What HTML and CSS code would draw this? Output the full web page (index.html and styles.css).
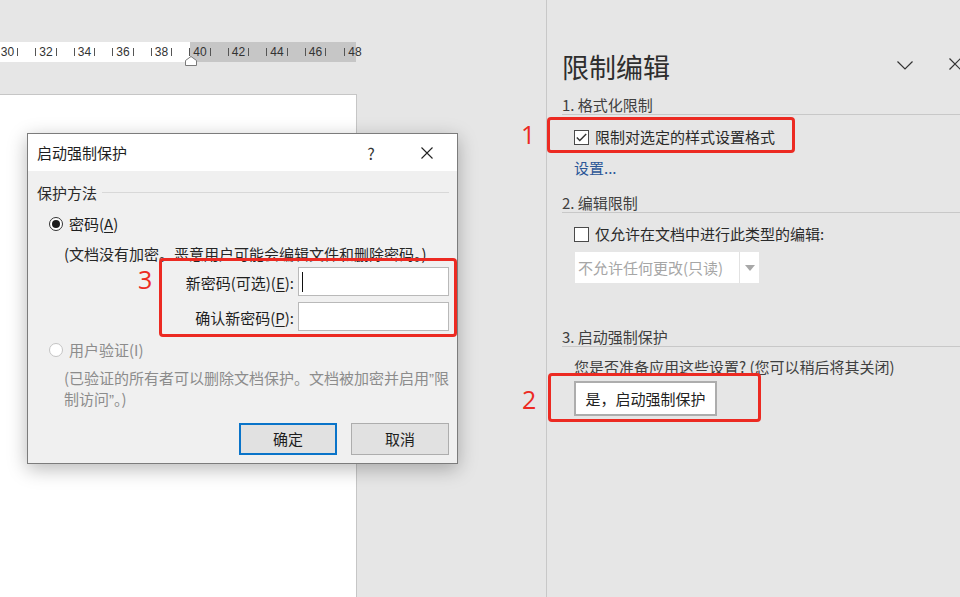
FILE: index.html
```html
<!DOCTYPE html>
<html lang="zh-CN">
<head>
<meta charset="utf-8">
<title>限制编辑</title>
<link rel="stylesheet" href="styles.css">
</head>
<body>
<div class="app">
  <div class="doc">
    <div class="ruler">
      <div class="ruler-cell"><span class="tick"></span><span>30</span><span class="tick"></span></div>
      <div class="ruler-cell"><span class="tick"></span><span>32</span><span class="tick"></span></div>
      <div class="ruler-cell"><span class="tick"></span><span>34</span><span class="tick"></span></div>
      <div class="ruler-cell"><span class="tick"></span><span>36</span><span class="tick"></span></div>
      <div class="ruler-cell"><span class="tick"></span><span>38</span><span class="tick"></span></div>
      <div class="ruler-cell"><span class="tick"></span><span>40</span><span class="tick"></span></div>
      <div class="ruler-cell"><span class="tick"></span><span>42</span><span class="tick"></span></div>
      <div class="ruler-cell"><span class="tick"></span><span>44</span><span class="tick"></span></div>
      <div class="ruler-cell"><span class="tick"></span><span>46</span><span class="tick"></span></div>
      <div class="ruler-cell"><span class="tick"></span><span>48</span></div>
    </div>
    <svg class="indent-marker" width="12" height="10" viewBox="0 0 12 10"><polygon points="0.5,9.5 0.5,4.5 6,0.5 11.5,4.5 11.5,9.5" fill="#fff" stroke="#7a7a7a" stroke-width="1"/></svg>
    <div class="page"></div>
  </div>

  <aside class="pane">
    <div class="pane-head">
      <div class="pane-title">限制编辑</div>
      <svg class="pane-chevron" width="16" height="9" viewBox="0 0 16 9"><polyline points="0.5,0.5 8,8 15.5,0.5" fill="none" stroke="#333" stroke-width="1.2"/></svg>
      <svg class="pane-close" width="12" height="12" viewBox="0 0 12 12"><path d="M0.5 0.5 L11.5 11.5 M11.5 0.5 L0.5 11.5" stroke="#333" stroke-width="1.2"/></svg>
    </div>

    <div class="sec-head sec-1">1. 格式化限制</div>
    <div class="check-row row-1">
      <span class="checkbox checked"><svg width="11" height="9" viewBox="0 0 11 9"><polyline points="0.8,4.5 3.8,7.5 10.2,1" fill="none" stroke="#333" stroke-width="1.4"/></svg></span>
      <span>限制对选定的样式设置格式</span>
    </div>
    <div class="link">设置...</div>

    <div class="sec-head sec-2">2. 编辑限制</div>
    <div class="check-row row-2">
      <span class="checkbox"></span>
      <span>仅允许在文档中进行此类型的编辑:</span>
    </div>
    <div class="dropdown">
      <span class="dropdown-text">不允许任何更改(只读)</span>
      <span class="dropdown-arrow"><svg width="10" height="6" viewBox="0 0 10 6"><polygon points="0,0 10,0 5,6" fill="#a8a8a8"/></svg></span>
    </div>

    <div class="sec-head sec-3">3. 启动强制保护</div>
    <div class="question">您是否准备应用这些设置? (您可以稍后将其关闭)</div>
    <div class="start-btn">是，启动强制保护</div>
  </aside>
</div>

<div class="dialog">
  <div class="dlg-title">
    <span>启动强制保护</span>
    <span class="dlg-help">?</span>
    <svg class="dlg-close" width="12" height="12" viewBox="0 0 12 12"><path d="M0.5 0.5 L11.5 11.5 M11.5 0.5 L0.5 11.5" stroke="#222" stroke-width="1.1"/></svg>
  </div>
  <div class="dlg-body">
    <div class="group-head">保护方法</div>
    <div class="radio-row radio-1">
      <span class="radio on"><span class="dot"></span></span>
      <span>密码(<u>A</u>)</span>
    </div>
    <div class="desc desc-1">(文档没有加密。恶意用户可能会编辑文件和删除密码。)</div>
    <div class="pw-grid">
      <span class="pw-label">新密码(可选)(<u>E</u>):</span>
      <div class="pw-input"><span class="caret"></span></div>
      <span class="pw-label">确认新密码(<u>P</u>):</span>
      <div class="pw-input"></div>
    </div>
    <div class="radio-row radio-2 disabled">
      <span class="radio"></span>
      <span>用户验证(I)</span>
    </div>
    <div class="desc desc-2 disabled">
      <span class="line">(已验证的所有者可以删除文档保护。文档被加密并启用<span class="q">”</span>限</span>
      <span class="line">制访问<span class="q">”</span>。)</span>
    </div>
    <div class="dlg-buttons">
      <div class="btn btn-default">确定</div>
      <div class="btn">取消</div>
    </div>
  </div>
</div>

<div class="anno anno-box-1"></div>
<div class="anno anno-box-2"></div>
<div class="anno anno-box-3"></div>
<div class="anno-num num-1">1</div>
<div class="anno-num num-2">2</div>
<div class="anno-num num-3">3</div>
</body>
</html>
```

FILE: styles.css
```css
* { box-sizing: border-box; }
html, body { margin: 0; padding: 0; }
body {
  width: 960px;
  height: 597px;
  overflow: hidden;
  position: relative;
  background: #e6e6e6;
  font-family: "Noto Sans CJK SC", "Noto Sans", sans-serif;
  color: #262626;
}
u { text-decoration: underline; text-underline-offset: 2px; }

.app { display: flex; height: 597px; }

/* document side */
.doc { width: 546px; flex: none; padding-top: 42px; position: relative; }
.ruler {
  width: 356px;
  height: 20px;
  background: linear-gradient(to right, #fff 0, #fff 190px, #c6c6c6 190px, #c6c6c6 356px);
  display: flex;
  font-family: "Liberation Sans", sans-serif;
  font-size: 12px;
  line-height: 20px;
  color: #333;
}
.ruler-cell {
  flex: none;
  width: 38.5px;
  display: flex;
  justify-content: center;
  align-items: center;
  gap: 3px;
}
.ruler-cell:first-child { margin-left: -11.75px; }
.ruler-cell:last-child { justify-content: flex-start; padding-left: 9.6px; }
.tick { width: 1px; height: 8px; background: #555; }
.indent-marker { position: absolute; left: 185px; top: 56px; }
.page {
  margin-top: 32px;
  width: 357px;
  height: 503px;
  background: #fff;
  border-top: 1px solid #c6c6c6;
  border-right: 1px solid #c6c6c6;
}

/* right task pane */
.pane {
  flex: 1;
  border-left: 1px solid #c8c8c8;
  padding: 49px 0 0 15px;
  font-size: 15px;
  line-height: 20px;
}
.pane-head { display: flex; align-items: center; height: 36px; }
.pane-title { font-size: 27px; line-height: 36px; color: #2e2e2e; }
.pane-chevron { margin-left: auto; margin-top: -4px; }
.pane-close { margin-left: 36px; margin-right: -1px; margin-top: -6px; }

.sec-head {
  line-height: 19px;
  border-bottom: 1px solid #c8c8c8;
  color: #404040;
}
.sec-1 { margin-top: 10px; }
.sec-2 { margin-top: 15px; }
.sec-3 { margin-top: 44px; }

.check-row { display: flex; align-items: center; gap: 6px; padding-left: 12px; color: #2a2a2a; }
.row-1 { margin-top: 12px; }
.row-2 { margin-top: 11px; }
.checkbox {
  width: 15px; height: 15px;
  border: 1px solid #4a4a4a;
  background: #fff;
  display: flex; align-items: center; justify-content: center;
}
.link { margin-top: 11px; padding-left: 12px; color: #2b5797; }

.dropdown {
  margin: 8px 0 0 13px;
  width: 184px;
  height: 31px;
  background: #fff;
  display: flex;
}
.dropdown-text { flex: 1; padding-left: 3px; line-height: 31px; color: #a6a6a6; }
.dropdown-arrow {
  width: 20px;
  border-left: 1px solid #e2e2e2;
  display: flex; align-items: center; justify-content: center;
}

.question { margin-top: 10px; padding-left: 12px; color: #404040; }
.start-btn {
  margin: 4px 0 0 12px;
  width: 143px;
  height: 35px;
  background: #fff;
  border: 2px solid #adadad;
  display: flex; align-items: center; justify-content: center;
  color: #222;
}

/* dialog */
.dialog {
  position: absolute;
  left: 27px;
  top: 133px;
  width: 431px;
  height: 331px;
  border: 1px solid #7c7c7c;
  box-shadow: 0 5px 18px rgba(0, 0, 0, 0.28);
  font-size: 15px;
  line-height: 20px;
  color: #1e1e1e;
}
.dlg-title {
  height: 37px;
  background: #fff;
  display: flex;
  align-items: center;
  padding: 0 24px 0 9px;
}
.dlg-help { margin-left: auto; width: 8px; text-align: center; margin-right: 46px; font-size: 16px; color: #333; }
.dlg-body {
  background: #f0f0f0;
  height: 292px;
  padding: 12px 8px 0 9px;
}
.group-head { display: flex; align-items: center; gap: 5px; color: #2a2a2a; }
.group-head::after { content: ""; flex: 1; height: 1px; background: #d8d8d8; margin-top: -1px; }

.radio-row { display: flex; align-items: center; gap: 6px; padding-left: 12px; }
.radio-1 { margin-top: 11px; }
.radio-2 { margin-top: 9px; }
.radio {
  width: 14px; height: 14px;
  border-radius: 50%;
  border: 1px solid #c4c4c4;
  background: #fff;
  display: flex; align-items: center; justify-content: center;
}
.radio.on { border-color: #333; }
.dot { width: 8px; height: 8px; border-radius: 50%; background: #1a1a1a; }
.disabled { color: #8c8c8c; }

.desc { padding-left: 27px; color: #262626; }
.desc.disabled { color: #8c8c8c; }
.desc-1 { margin-top: 10px; }
.desc-2 { margin-top: 8px; }
.desc .line { display: block; white-space: nowrap; }
.q { font-family: "Liberation Sans", sans-serif; }

.pw-grid {
  margin-top: 3px;
  display: grid;
  grid-template-columns: 1fr 151px;
  grid-auto-rows: 29px;
  column-gap: 4px;
  row-gap: 6px;
  align-items: center;
}
.pw-label { text-align: right; padding-top: 3px; }
.pw-input {
  height: 29px;
  background: #fff;
  border: 1px solid #b9b9b9;
  display: flex;
  align-items: center;
}
.caret { width: 1px; height: 20px; background: #111; margin-left: 3px; }

.dlg-buttons { margin-top: 13px; display: flex; justify-content: flex-end; gap: 14px; }
.btn {
  width: 98px;
  height: 32px;
  background: #e1e1e1;
  border: 1px solid #adadad;
  display: flex; align-items: center; justify-content: center;
}
.btn-default { border: 2px solid #0a74c9; }

/* red annotations */
.anno {
  position: absolute;
  border: 3px solid #ec2a22;
  border-radius: 4px;
}
.anno-box-1 { left: 547px; top: 117px; width: 248px; height: 36px; }
.anno-box-2 { left: 548px; top: 373px; width: 213px; height: 49px; }
.anno-box-3 { left: 159px; top: 258px; width: 298px; height: 79px; }
.anno-num {
  position: absolute;
  font-family: "Open Sans", "Noto Sans", sans-serif;
  font-weight: 400;
  font-size: 25px;
  line-height: 26px;
  color: #ec2a22;
}
.num-1 { left: 521px; top: 121px; }
.num-2 { left: 522px; top: 386px; }
.num-3 { left: 138px; top: 266px; }
```
